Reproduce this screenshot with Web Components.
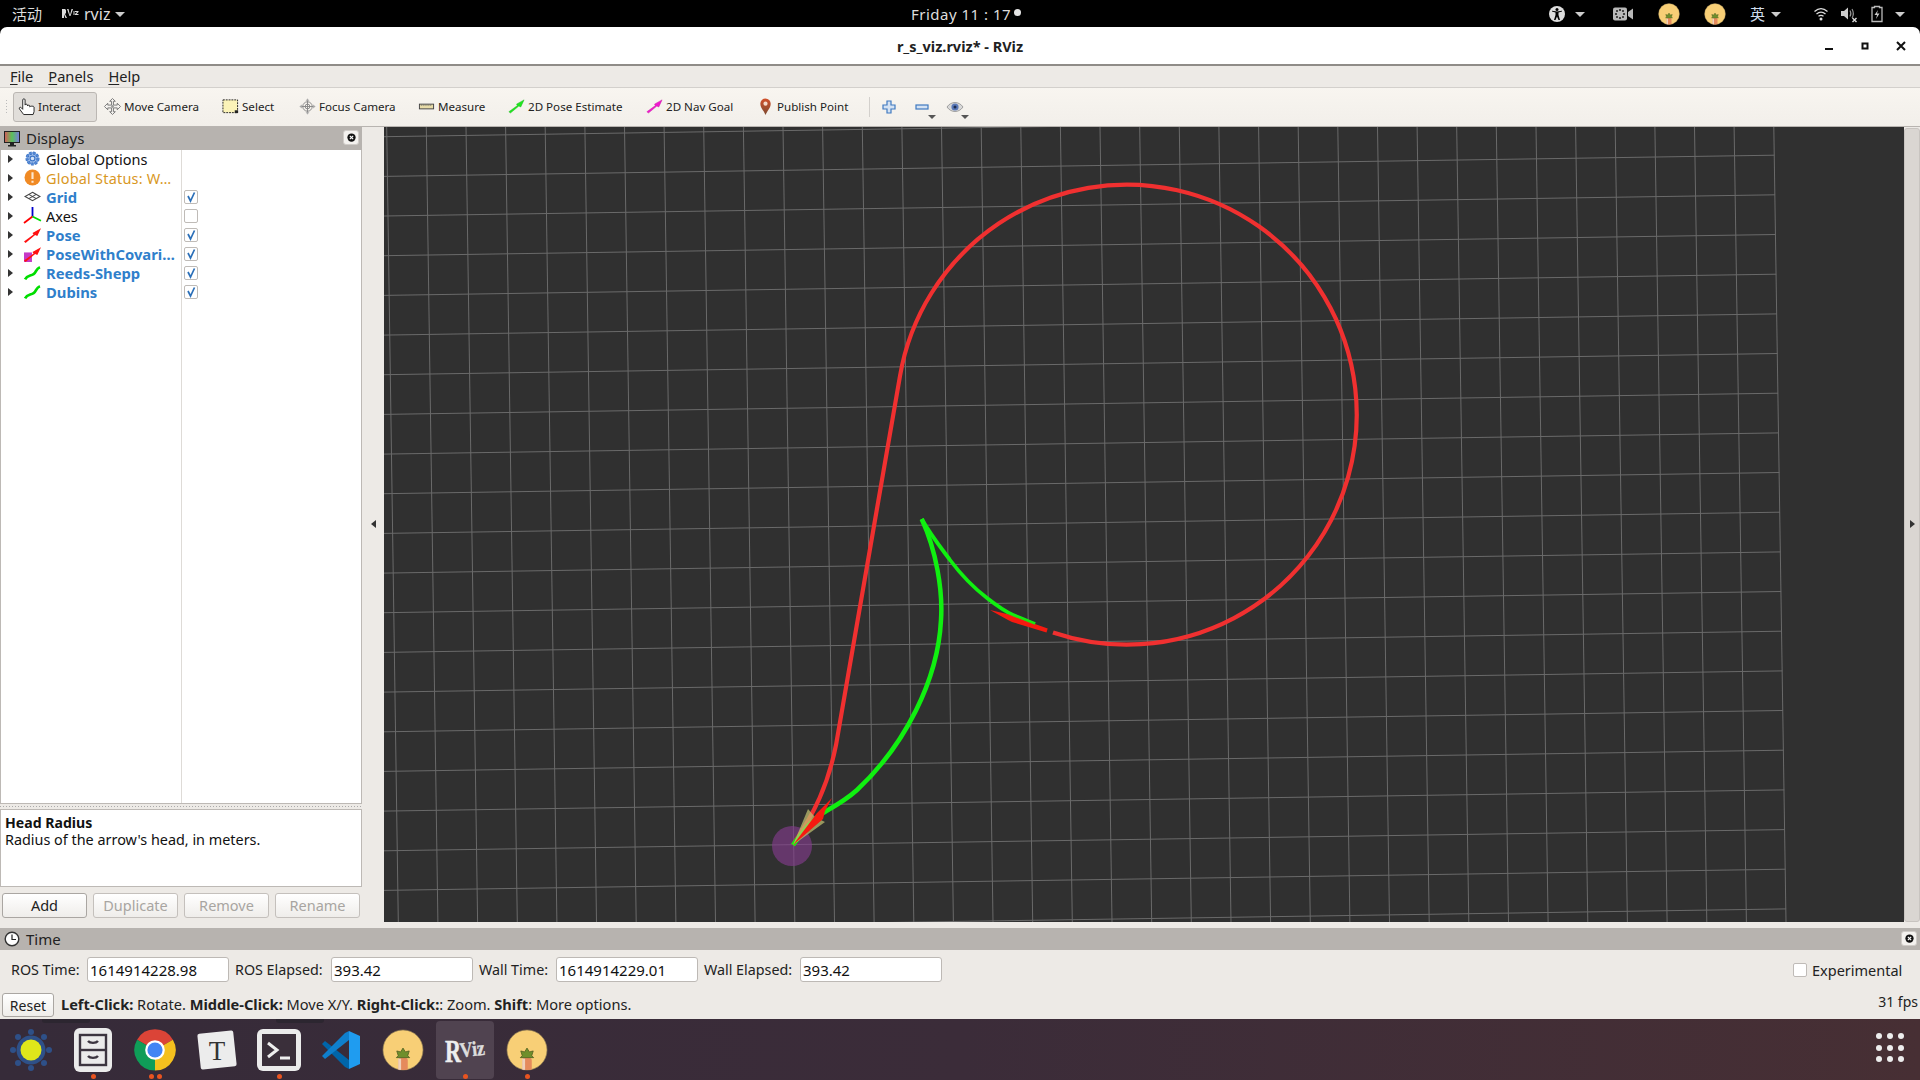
<!DOCTYPE html>
<html>
<head>
<meta charset="utf-8">
<title>RViz</title>
<style>
  html, body { margin: 0; padding: 0; background: #000; overflow: hidden; }
  body { font-family: "Noto Sans", "Noto Sans CJK SC", sans-serif; }
</style>
</head>
<body>
<rviz-app>
  <top-bar>
    <span slot="left" style="font-size:15px;margin-left:12px">活动</span>
    <app-icon slot="left" name="rvizsmall" size="18" style="margin-left:19px"></app-icon>
    <span slot="left" style="font-size:16px;margin-left:5px">rviz</span>
    <app-icon slot="left" name="caret" size="10" style="margin-left:5px"></app-icon>
    <app-icon slot="right" name="access" size="16"></app-icon>
    <app-icon slot="right" name="caret" size="10" style="margin-left:10px"></app-icon>
    <app-icon slot="right" name="camera" size="20" style="margin-left:28px"></app-icon>
    <app-icon slot="right" name="carrot" size="22" style="margin-left:25px"></app-icon>
    <app-icon slot="right" name="carrot" size="22" style="margin-left:24px"></app-icon>
    <span slot="right" style="font-size:15px;margin-left:24px;color:#cfdcec;width:15px">英</span>
    <app-icon slot="right" name="caret" size="10" style="margin-left:6px"></app-icon>
    <app-icon slot="right" name="wifi" size="14" style="margin-left:33px"></app-icon>
    <app-icon slot="right" name="speaker" size="16" style="margin-left:13px"></app-icon>
    <app-icon slot="right" name="battery" size="16" style="margin-left:12px"></app-icon>
    <app-icon slot="right" name="caret" size="10" style="margin-left:10px"></app-icon>
  </top-bar>
  <title-bar>r_s_viz.rviz* - RViz</title-bar>
  <menu-bar></menu-bar>
  <tool-bar>
    <tool-button icon="hand" w="84" active pad="4">Interact</tool-button>
    <tool-button icon="move" w="118">Move Camera</tool-button>
    <tool-button icon="select" w="77">Select</tool-button>
    <tool-button icon="focus" w="119">Focus Camera</tool-button>
    <tool-button icon="ruler" w="90">Measure</tool-button>
    <tool-button icon="posegreen" w="138">2D Pose Estimate</tool-button>
    <tool-button icon="posemagenta" w="111">2D Nav Goal</tool-button>
    <tool-button icon="pin" w="112">Publish Point</tool-button>
    <tool-divider></tool-divider>
    <tool-button icon="plus" w="33"></tool-button>
    <tool-button icon="minus" w="33" drop></tool-button>
    <tool-button icon="eye" w="33" drop></tool-button>
  </tool-bar>
  <main-row>
    <displays-panel slot="left">
      <tree-row icon="gear" label="Global Options"></tree-row>
      <tree-row icon="warn" label="Global Status: W…" tone="warn"></tree-row>
      <tree-row icon="grid" label="Grid" tone="on" check="on"></tree-row>
      <tree-row icon="axes" label="Axes" check="off"></tree-row>
      <tree-row icon="pose" label="Pose" tone="on" check="on"></tree-row>
      <tree-row icon="posecov" label="PoseWithCovari…" tone="on" check="on"></tree-row>
      <tree-row icon="path" label="Reeds-Shepp" tone="on" check="on"></tree-row>
      <tree-row icon="path" label="Dubins" tone="on" check="on"></tree-row>
    </displays-panel>
    <render-view slot="center"></render-view>
  </main-row>
  <time-panel>
    <time-field label="ROS Time:" value="1614914228.98" lw="76" style="margin-left:11px"></time-field>
    <time-field label="ROS Elapsed:" value="393.42" lw="96" style="margin-left:6px"></time-field>
    <time-field label="Wall Time:" value="1614914229.01" lw="77" style="margin-left:6px"></time-field>
    <time-field label="Wall Elapsed:" value="393.42" lw="96" style="margin-left:6px"></time-field>
  </time-panel>
  <status-row><b>Left-Click:</b> Rotate. <b>Middle-Click:</b> Move X/Y. <b>Right-Click:</b>: Zoom. <b>Shift</b>: More options.</status-row>
  <dock-bar>
    <dock-item icon="sun" w="62" size="48"></dock-item>
    <dock-item icon="files" w="62" size="46" dots="1"></dock-item>
    <dock-item icon="chrome" w="62" size="42" dots="2"></dock-item>
    <dock-item icon="typora" w="62" size="46"></dock-item>
    <dock-item icon="terminal" w="62" size="46" dots="1"></dock-item>
    <dock-item icon="vscode" w="62" size="40"></dock-item>
    <dock-item icon="carrot" w="62" size="42"></dock-item>
    <dock-item icon="rviz" w="62" size="58" dots="1" active></dock-item>
    <dock-item icon="carrot" w="62" size="42" dots="1"></dock-item>
  </dock-bar>
</rviz-app>

<script>
const CARROT = `<svg viewBox="0 0 44 44" width="100%" height="100%"><defs><clipPath id="cc"><circle cx="22" cy="22" r="21"/></clipPath></defs>
  <circle cx="22" cy="22" r="21" fill="#f8cf76" stroke="#8c7a52" stroke-width=".7"/>
  <g clip-path="url(#cc)"><rect x="17" y="30" width="10" height="16" rx="3" fill="#e58a5c"/><rect x="17" y="31" width="3" height="14" fill="#f2efe4" opacity=".7"/>
  <path d="M22 20l2.5 4 4-1-1.500 5 2 2h-14l2-2-1.500-5 4 1z" fill="#6f8f2c" stroke="#4d5c20" stroke-width=".8"/></g></svg>`;

const ARROW = "M0 14.500L9 8 8 6.500 16 2 12.500 9.500 10.500 8.500 1.500 16z";

const ICONS = {
  caret: '<svg viewBox="0 0 10 10"><path d="M0 3h10L5 8z" fill="#ccc"/></svg>',
  rvizsmall: '<svg viewBox="0 0 18 18"><path d="M1 4h3l1 1v3l-1 1 2 4H4.500L3 9.500V13H1zM6 4h1.500L9 10l1.500-6H12l-2.500 7h-1zM12.500 6h1v4h-1zM14 6h3.500v1L15.500 9H17.500v1H14V9l2-2h-2z" fill="#ddd"/></svg>',
  access: '<svg viewBox="0 0 16 16"><circle cx="8" cy="8" r="8" fill="#ddd"/><circle cx="8" cy="3.600" r="1.500" fill="#000"/><path d="M3 5.500l3.500 1V9L5 14h1.500L8 10.500 9.500 14H11L9.500 9V6.500l3.500-1V4.700L8 5.600 3 4.700z" fill="#000"/></svg>',
  camera: '<svg viewBox="0 0 20 14"><rect width="14" height="13" y=".5" rx="2" fill="#b9b9b9"/><path d="M15 5l5-3.500v11L15 9z" fill="#b9b9b9"/><g fill="#222"><circle cx="7" cy="3" r="1.100"/><circle cx="7" cy="11" r="1.100"/><circle cx="3" cy="7" r="1.100"/><circle cx="11" cy="7" r="1.100"/><circle cx="4" cy="4" r="1"/><circle cx="10" cy="4" r="1"/><circle cx="4" cy="10" r="1"/><circle cx="10" cy="10" r="1"/></g></svg>',
  carrot: CARROT,
  wifi: '<svg viewBox="0 0 14 14"><g fill="none" stroke="#ddd" stroke-width="1.300"><path d="M.5 4.500c4-3.500 9-3.500 13 0"/><path d="M2.500 7c3-2.500 6-2.500 9 0"/><path d="M4.500 9.300c1.500-1.200 3.500-1.200 5 0"/></g><circle cx="7" cy="12" r="1.500" fill="#ddd"/></svg>',
  speaker: '<svg viewBox="0 0 16 16"><path d="M0 5h3l4-3.500v12L3 10H0z" fill="#ccc"/><g fill="none" stroke="#999" stroke-width="1.100"><path d="M9 4.500c1.200 2 1.200 4 0 6"/><path d="M11 3c1.800 3 1.800 6 0 9"/></g><path d="M11.500 12l4 4m0-4l-4 4" stroke="#ddd" stroke-width="1.400"/></svg>',
  battery: '<svg viewBox="0 0 16 16"><path d="M5.500 1.500v-1h5v1h2.500v14H3v-14z" fill="none" stroke="#bbb" stroke-width="1.300"/><path d="M9 4L5.500 9H8l-1 4 3.500-5.500H8z" fill="#ccc"/></svg>',
  hand: '<svg viewBox="0 0 18 18"><path d="M6 17.500L1.500 11.500C.8 10 2.500 9.300 3.500 10.300L5 12V2C5 .5 7.500 .5 7.500 2V7.500C7.500 6.200 10 6.200 10 7.500V8.500C10 7.300 12.500 7.300 12.500 8.500V9.500C12.500 8.300 17 8.300 17 9.500V14.500L16 17.500z" fill="#fff" stroke="#222" stroke-width="1"/></svg>',
  move: '<svg viewBox="0 0 18 18"><path d="M9 .5l3 3h-2v4h4v-2l3.500 3.500-3.500 3.500v-2h-4v4h2l-3 3-3-3h2v-4H4v2L.5 9 4 5.500v2h4v-4H6z" fill="#f4f2ef" stroke="#777" stroke-width="1"/><circle cx="9" cy="9" r="1.500" fill="#999"/></svg>',
  select: '<svg viewBox="0 0 18 18"><rect x="1" y="2" width="15.500" height="13.500" fill="#fbf3b8" stroke="#222" stroke-dasharray="2 1"/><path d="M13.500 13h3.500v3h-3.500z" fill="#222"/></svg>',
  focus: '<svg viewBox="0 0 18 18"><g fill="none" stroke="#888"><circle cx="9" cy="9" r="5"/><circle cx="9" cy="9" r="2.500"/><path d="M9 1v16M1 9h16"/></g><path d="M9 .5l2 2.500H7zM9 17.500l2-2.500H7zM.5 9L3 7v4zM17.500 9L15 7v4z" fill="#aaa"/></svg>',
  ruler: '<svg viewBox="0 0 18 18"><rect x="1.500" y="6.500" width="15" height="5" fill="#e8dca8" stroke="#444"/><path d="M3.500 6.500v2M5.500 6.500v2M7.500 6.500v2M9.500 6.500v2M11.500 6.500v2M13.500 6.500v2" stroke="#666" stroke-width=".7"/></svg>',
  posegreen: `<svg viewBox="0 0 18 18"><path d="${ARROW}" transform="translate(1 0)" fill="#1ee81e" stroke="#18b418" stroke-width=".5"/></svg>`,
  posemagenta: `<svg viewBox="0 0 18 18"><path d="${ARROW}" transform="translate(1 0)" fill="#f018d0" stroke="#c8149c" stroke-width=".5"/></svg>`,
  pin: '<svg viewBox="0 0 18 18"><defs><linearGradient id="pg" x1="0" y1="0" x2="0" y2="1"><stop offset="0" stop-color="#d2502a"/><stop offset="1" stop-color="#7d4a30"/></linearGradient></defs><path d="M9 18C7 13 3.500 10.500 3.500 6a5.500 5.500 0 0111 0C14.500 10.500 11 13 9 18z" fill="url(#pg)"/><circle cx="9" cy="6" r="2.200" fill="#f4d9c9"/></svg>',
  plus: '<svg viewBox="0 0 14 14"><path d="M5 1h4v4h4v4H9v4H5V9H1V5h4z" fill="#d4e2f3" stroke="#3f79c0" stroke-width="1.200"/></svg>',
  minus: '<svg viewBox="0 0 14 14"><rect x="1" y="5" width="12" height="4" fill="#d4e2f3" stroke="#3f79c0" stroke-width="1.200"/></svg>',
  eye: '<svg viewBox="0 0 18 14"><path d="M1 7c4-6 12-6 16 0-4 6-12 6-16 0z" fill="#d8d8d8" stroke="#a0a0a0"/><circle cx="9" cy="7" r="3.600" fill="#5a78b8"/><circle cx="9" cy="7" r="1.500" fill="#1c2c50"/></svg>',
  monitor: '<svg viewBox="0 0 16 16"><defs><linearGradient id="mg" x1="0" x2="1"><stop offset="0" stop-color="#d85a5a"/><stop offset=".5" stop-color="#5ac05a"/><stop offset="1" stop-color="#7a7ae0"/></linearGradient></defs><rect x=".5" y=".5" width="15" height="11" fill="url(#mg)" stroke="#222"/><path d="M6 12h4v2H6zM4 14h8v1.500H4z" fill="#222"/></svg>',
  clock: '<svg viewBox="0 0 16 16"><circle cx="8" cy="8" r="6.800" fill="#fff" stroke="#333" stroke-width="1.400"/><path d="M8 3.500V8.500h4" fill="none" stroke="#222" stroke-width="1.200"/></svg>',
  closex: '<svg viewBox="0 0 12 12"><circle cx="6" cy="6" r="4.500" fill="#111"/><path d="M4.200 4.200l3.600 3.600m0-3.600L4.200 7.800" stroke="#fff" stroke-width="1.300"/></svg>',
  gear: '<svg viewBox="0 0 14 14"><circle cx="7" cy="7" r="4.500" fill="#a8c4ee" stroke="#3e76c6" stroke-width="2.600" stroke-dasharray="2 1"/><circle cx="7" cy="7" r="4.600" fill="none" stroke="#5a8cd6" stroke-width="1"/><circle cx="7" cy="7" r="2" fill="#d5e2f6" stroke="#3e76c6"/></svg>',
  warn: '<svg viewBox="0 0 16 16"><circle cx="8" cy="8" r="7.500" fill="#f08a24"/><path d="M7 3h2v6.500H7zM7 11h2v2H7z" fill="#fde8d0"/></svg>',
  grid: '<svg viewBox="0 0 16 16"><path d="M8 4l7 4-7 4-7-4z" fill="none" stroke="#444" stroke-width="1"/><path d="M4.500 6L11.500 10M11.500 6L4.500 10" stroke="#444" stroke-width="1"/></svg>',
  axes: '<svg viewBox="0 0 16 16"><path d="M8 9V0" stroke="#00c" stroke-width="1.700"/><path d="M8 9l-8 6" stroke="#f00" stroke-width="1.700"/><path d="M8 9l8 4" stroke="#0d0" stroke-width="1.700"/></svg>',
  pose: `<svg viewBox="0 0 16 16"><path d="${ARROW}" fill="#f11"/></svg>`,
  posecov: `<svg viewBox="0 0 16 16"><rect y="7" width="7.500" height="9" fill="#c63ac6"/><path d="${ARROW}" fill="#f11"/></svg>`,
  path: '<svg viewBox="0 0 16 16"><path d="M1 14.500c2-4 5-3 8-5s2-5 6-6.500" fill="none" stroke="#0d0" stroke-width="2.600"/></svg>',
  sun: '<svg viewBox="0 0 48 48"><g fill="#2e5088"><circle cx="24" cy="6" r="3"/><circle cx="24" cy="42" r="3"/><circle cx="6" cy="24" r="3"/><circle cx="42" cy="24" r="3"/><circle cx="11" cy="11" r="3"/><circle cx="37" cy="11" r="3"/><circle cx="11" cy="37" r="3"/><circle cx="37" cy="37" r="3"/></g><circle cx="24" cy="24" r="14.500" fill="#2e5088"/><circle cx="24" cy="24" r="10.500" fill="#dfe61a"/></svg>',
  files: '<svg viewBox="0 0 46 46"><rect x="4" y="1" width="38" height="44" rx="6" fill="#ebebeb"/><rect x="10" y="8" width="26" height="30" fill="none" stroke="#3c3540" stroke-width="2.400"/><path d="M10 23h26" stroke="#3c3540" stroke-width="2.400"/><path d="M18 14c2 2.500 8 2.500 10 0M18 29c2 2.500 8 2.500 10 0" fill="none" stroke="#3c3540" stroke-width="2.400"/></svg>',
  chrome: `<svg viewBox="-21 -21 42 42"><path d="M0 0L-17.900-10.300A20.600 20.600 0 0117.900-10.300z" fill="#db4437"/><path d="M0 0L17.900-10.300A20.600 20.600 0 010 20.600z" fill="#f4c01e"/><path d="M0 0L0 20.600A20.600 20.600 0 01-17.900-10.300z" fill="#0f9d58"/><circle r="9.800" fill="#fff"/><circle r="7.600" fill="#4285f4"/></svg>`,
  typora: '<svg viewBox="0 0 46 46"><rect x="5" y="5" width="36" height="36" rx="2" fill="#ececec" transform="rotate(-6 23 23)"/><text x="23" y="33" text-anchor="middle" font-family="Liberation Serif, serif" font-size="27" fill="#333">T</text></svg>',
  terminal: '<svg viewBox="0 0 46 46"><rect x="1" y="2" width="44" height="42" rx="6" fill="#ebebeb"/><rect x="6" y="7" width="34" height="32" fill="#3a2f3a"/><path d="M12 16l9 7-9 7" fill="none" stroke="#eee" stroke-width="3"/><path d="M24 31h10" stroke="#eee" stroke-width="3"/></svg>',
  vscode: '<svg viewBox="0 0 40 40"><path d="M1 14l3-3 24 19v9l-4-2z" fill="#0065a9"/><path d="M1 26l3 3L28 10V1l-4 2z" fill="#0f7fcc"/><path d="M28 1l11 5v28l-11 5z" fill="#1f9cf0"/></svg>',
  rviz: '<svg viewBox="0 0 58 58"><text x="9" y="41" font-family="Liberation Serif, serif" font-weight="700" font-size="31" fill="#eee" stroke="#eee" stroke-width=".5" textLength="16" lengthAdjust="spacingAndGlyphs">R</text><text x="24" y="35" transform="rotate(-6 36 30)" font-family="Liberation Serif, serif" font-weight="700" font-size="21" fill="#ddd" stroke="#ddd" stroke-width=".4" textLength="25" lengthAdjust="spacingAndGlyphs">Viz</text></svg>'
};

function define(name, cls) { customElements.get(name) || customElements.define(name, cls); }

class AppIcon extends HTMLElement {
  connectedCallback() {
    const s = this.getAttribute("size") || 16;
    this.attachShadow({ mode: "open" }).innerHTML = `<style>
      :host { display: inline-flex; width: ${s}px; height: ${s}px; flex: none; align-items: center; justify-content: center; }
      svg { width: 100%; height: 100%; display: block; overflow: visible; }
    </style>${ICONS[this.getAttribute("name")] || ""}`;
  }
}
define("app-icon", AppIcon);

class RvizApp extends HTMLElement {
  constructor() {
    super();
    this.attachShadow({ mode: "open" }).innerHTML = `<style>
      :host { display: flex; flex-direction: column; width: 1920px; height: 1080px; overflow: hidden; color: #111; font-family: "Noto Sans", "Noto Sans CJK SC", sans-serif; }
    </style><slot></slot>`;
  }
}
define("rviz-app", RvizApp);

class TopBar extends HTMLElement {
  constructor() {
    super();
    this.attachShadow({ mode: "open" }).innerHTML = `<style>
      :host { display: grid; grid-template-columns: 1fr 220px 1fr; align-items: center; height: 27px; background: #000; color: #ddd; flex: none; }
      .l, .r { display: flex; align-items: center; }
      .r { justify-content: flex-end; padding-right: 15px; }
      .c { display: flex; align-items: center; justify-content: center; gap: 3px; padding-left: 12px; font-size: 15px; letter-spacing: .5px; color: #ddd; }
      i { width: 7px; height: 7px; border-radius: 50%; background: #e4e4e4; margin-top: -2px; }
    </style>
    <div class="l"><slot name="left"></slot></div>
    <div class="c"><span>Friday 11 : 17</span><i></i></div>
    <div class="r"><slot name="right"></slot></div>`;
  }
}
define("top-bar", TopBar);

class TitleBar extends HTMLElement {
  constructor() {
    super();
    this.attachShadow({ mode: "open" }).innerHTML = `<style>
      :host { display: flex; align-items: center; justify-content: center; position: relative; height: 37px; flex: none; background: #fff; border-radius: 7px 7px 0 0; border-bottom: 2px solid #8f8c88; font-size: 14.500px; font-weight: 700; color: #222; }
      .ctl { position: absolute; right: 13px; top: 0; height: 100%; display: flex; align-items: center; gap: 24px; }
      svg { width: 12px; height: 12px; display: block; }
    </style><slot></slot>
    <div class="ctl">
      <svg viewBox="0 0 12 12"><path d="M2 9h8" stroke="#111" stroke-width="2"/></svg>
      <svg viewBox="0 0 12 12"><rect x="3.500" y="3.500" width="5" height="5" fill="none" stroke="#111" stroke-width="2"/></svg>
      <svg viewBox="0 0 12 12"><path d="M2 2l8 8m0-8l-8 8" stroke="#111" stroke-width="2"/></svg>
    </div>`;
  }
}
define("title-bar", TitleBar);

class MenuBar extends HTMLElement {
  constructor() {
    super();
    this.attachShadow({ mode: "open" }).innerHTML = `<style>
      :host { display: flex; align-items: center; height: 21px; box-sizing: content-box; flex: none; padding-left: 10px; gap: 15px; background: #edeae6; border-bottom: 1px solid #d3d0cc; font-size: 14.600px; color: #222; }
      span { margin-top: -2px; }
      u { text-underline-offset: 2px; }
    </style><span><u>F</u>ile</span><span><u>P</u>anels</span><span><u>H</u>elp</span>`;
  }
}
define("menu-bar", MenuBar);

class ToolBar extends HTMLElement {
  constructor() {
    super();
    this.attachShadow({ mode: "open" }).innerHTML = `<style>
      :host { display: flex; align-items: center; height: 39px; box-sizing: border-box; padding-bottom: 1px; flex: none; padding-left: 13px; position: relative; background: linear-gradient(#f8f5f0, #f2efea); border-bottom: 1px solid #b8b4b0; box-shadow: inset 0 -1px 0 #f2efea; }
      .grip { position: absolute; left: 5px; top: 11px; width: 3px; height: 16px; background: radial-gradient(circle, #bbb 40%, transparent 45%) 0 0/3px 3px; }
    </style><div class="grip"></div><slot></slot>`;
  }
}
define("tool-bar", ToolBar);

class ToolDivider extends HTMLElement {
  constructor() {
    super();
    this.attachShadow({ mode: "open" }).innerHTML = `<style>
      :host { display: block; width: 1px; height: 20px; background: #d3d0cc; margin: 0 2px 0 0; flex: none; }
    </style>`;
  }
}
define("tool-divider", ToolDivider);

class ToolButton extends HTMLElement {
  connectedCallback() {
    const w = this.getAttribute("w");
    const pad = this.getAttribute("pad") || 0;
    const size = { plus: 14, minus: 14, eye: 18 }[this.getAttribute("icon")] || 17;
    const drop = this.hasAttribute("drop") ? '<span class="drop"></span>' : "";
    this.attachShadow({ mode: "open" }).innerHTML = `<style>
      :host { display: flex; align-items: center; gap: 3px; width: ${w}px; height: 30px; flex: none; box-sizing: border-box; padding-left: ${pad}px; font-size: 11.600px; color: #222; position: relative; }
      :host([active]) { background: #e1deda; border: 1px solid #bbb7b3; border-radius: 3px; margin-right: 7px; }
      :host([icon=plus]), :host([icon=minus]), :host([icon=eye]) { justify-content: center; }
      .drop { position: absolute; right: 2px; bottom: 3px; border: 4px solid transparent; border-top: 4px solid #555; border-bottom: 0; }
    </style><app-icon name="${this.getAttribute("icon")}" size="${size}"></app-icon><slot></slot>${drop}`;
  }
}
define("tool-button", ToolButton);

class MainRow extends HTMLElement {
  constructor() {
    super();
    this.attachShadow({ mode: "open" }).innerHTML = `<style>
      :host { display: flex; height: 796px; flex: none; background: #edeae6; }
      .split { width: 22px; flex: none; display: flex; align-items: center; justify-content: center; }
      .split i { border: 4px solid transparent; border-right: 5px solid #333; border-left: 0; margin-top: -2px; }
      .handle { width: 16px; flex: none; box-sizing: border-box; background: #dad6d2; border: 1px solid #c8c4c0; border-radius: 3px; margin: 1px 0; display: flex; align-items: center; justify-content: center; }
      .handle i { border: 4px solid transparent; border-left: 5px solid #333; border-right: 0; margin-top: -2px; }
    </style>
    <slot name="left"></slot>
    <div class="split"><i></i></div>
    <slot name="center"></slot>
    <div class="handle"><i></i></div>`;
  }
}
define("main-row", MainRow);

class PanelTitle extends HTMLElement {
  connectedCallback() {
    this.attachShadow({ mode: "open" }).innerHTML = `<style>
      :host { display: flex; align-items: center; height: var(--h, 23px); flex: none; padding-left: 4px; gap: 6px; background: #b7b3af; font-size: 15px; color: #222; position: relative; }
      .t { margin-top: var(--tt, -1px); }
      .x { position: absolute; right: 3px; top: 3px; width: 16px; height: 15px; background: #f4f2ef; border: 1px solid #d0ccc8; border-radius: 3px; box-sizing: border-box; display: flex; align-items: center; justify-content: center; }
      .x svg { width: 11px; height: 11px; }
    </style><app-icon name="${this.getAttribute("icon")}" size="16"></app-icon><span class="t"><slot></slot></span><div class="x">${ICONS.closex}</div>`;
  }
}
define("panel-title", PanelTitle);

class DisplaysPanel extends HTMLElement {
  constructor() {
    super();
    this.attachShadow({ mode: "open" }).innerHTML = `<style>
      :host { display: flex; flex-direction: column; width: 362px; flex: none; font-size: 14px; }
      .tree { height: 654px; box-sizing: border-box; background: linear-gradient(#dedbd7, #dedbd7) 180px 0/1px 100% no-repeat, #fff; border: 1px solid #bdb9b5; border-top: 0; }
      .rows { margin-top: -1px; }
      .grip { height: 5px; flex: none; background: radial-gradient(circle, #aaa 40%, transparent 45%) 173px 1px/3px 3px repeat-x; }
      .help { height: 78px; box-sizing: border-box; flex: none; padding: 4px; background: #fff; border: 1px solid #bdb9b5; font-size: 14.400px; line-height: 17px; color: #111; }
      .help b { display: block; font-size: 14.100px; }
      .btns { display: flex; gap: 6px; padding: 6px 2px 0; }
      .btn { width: 85px; height: 25px; box-sizing: border-box; padding-bottom: 2px; display: flex; align-items: center; justify-content: center; background: linear-gradient(#fff, #efedea); border: 1px solid #c4c0bc; border-radius: 3px; color: #a8a5a1; font-size: 14.500px; }
      .btn.on { color: #222; border-color: #aaa6a2; }
    </style>
    <panel-title icon="monitor">Displays</panel-title>
    <div class="tree"><div class="rows"><slot></slot></div></div>
    <div class="grip"></div>
    <div class="help"><b>Head Radius</b>Radius of the arrow's head, in meters.</div>
    <div class="btns"><div class="btn on">Add</div><div class="btn">Duplicate</div><div class="btn">Remove</div><div class="btn">Rename</div></div>`;
  }
}
define("displays-panel", DisplaysPanel);

class TreeRow extends HTMLElement {
  connectedCallback() {
    const check = this.getAttribute("check");
    const box = check ? `<span class="box">${check === "on" ? '<svg viewBox="0 0 12 12" width="12" height="12"><path d="M3 5l2.500 5L9.500 1.500" fill="none" stroke="#2b6fb8" stroke-width="1.700"/></svg>' : ""}</span>` : "";
    this.attachShadow({ mode: "open" }).innerHTML = `<style>
      :host { display: flex; align-items: center; height: 19px; font-size: 14.500px; color: #111; }
      :host([tone=on]) .t { color: #2f7fcb; font-weight: 700; font-size: 14.800px; }
      :host([tone=warn]) .t { color: #d9981f; letter-spacing: .2px; }
      .tri { width: 0; height: 0; margin-left: 7px; border: 4.500px solid transparent; border-left: 5px solid #333; border-right: 0; flex: none; }
      .ic { width: 17px; height: 17px; margin-left: 11px; flex: none; display: flex; }
      .t { margin-left: 5px; width: 137px; flex: none; white-space: nowrap; overflow: hidden; }
      .box { width: 14px; height: 14px; box-sizing: border-box; margin-left: 1px; background: #fff; border: 1px solid #bfbbb7; border-radius: 2px; display: flex; align-items: center; justify-content: center; flex: none; }
    </style><span class="tri"></span><span class="ic"><app-icon name="${this.getAttribute("icon")}" size="17"></app-icon></span><span class="t">${this.getAttribute("label")}</span>${box}`;
  }
}
define("tree-row", TreeRow);

class RenderView extends HTMLElement {
  connectedCallback() {
    let grid = "";
    for (let k = 0; k <= 35; k++) {
      grid += `<path d="M${(386.7 + 39.63 * k).toFixed(1)} 127L${(398.3 + 39.65 * k).toFixed(1)} 922"/>`;
    }
    for (let j = 0; j <= 20; j++) {
      const yl = 136.7 + 39.67 * j;
      const yr = yl - 21.2;
      const xr = 1774 + (yr - 127) * 0.0155;
      grid += `<path d="M384 ${yl.toFixed(1)}L${xr.toFixed(1)} ${yr.toFixed(1)}"/>`;
    }
    this.attachShadow({ mode: "open" }).innerHTML = `<style>
      :host { display: block; width: 1520px; height: 795px; flex: none; background: #303030; }
      svg { display: block; width: 1520px; height: 795px; }
    </style>
    <svg viewBox="384 127 1520 795">
      <g stroke="#6a6a6a" stroke-width="1" fill="none">${grid}</g>
      <circle cx="792" cy="846" r="20" fill="#823c8c" fill-opacity=".65"/>
      <path d="M1053 632.500A230 230 0 1 0 900 376L836 745C828 785 815 812 793 845" fill="none" stroke="#f03030" stroke-width="4.200"/>
      <path d="M921.700 519C932 537 942 549 950 560C962 576 974 588 987 598C996 605 1004 611 1013 615C1020 618 1028 621 1035 624" fill="none" stroke="#10f010" stroke-width="3.800"/>
      <path d="M921.700 519C936 550 943 590 941 620C938 680 905 745 857 790C846 800 835 806 823 813C812 820 802 832 793 845" fill="none" stroke="#10f010" stroke-width="4.500"/>
      <path d="M793 845L808 809L815 817L825 822z" fill="#c0c070" fill-opacity=".72"/>
      <path d="M793 845L817 813L832 798L825 811L823 819z" fill="#f61a10"/>
      <path d="M990 610L1007 614L1047.700 628.500L1046.500 632.500L1012 622L1008 620z" fill="#f61a10"/>
      <path d="M1012 615L1035 624" stroke="#22e010" stroke-width="1.500"/>
    </svg>`;
  }
}
define("render-view", RenderView);

class TimeField extends HTMLElement {
  connectedCallback() {
    this.attachShadow({ mode: "open" }).innerHTML = `<style>
      :host { display: flex; align-items: center; flex: none; font-size: 14.300px; color: #222; }
      .l { width: ${this.getAttribute("lw")}px; flex: none; white-space: nowrap; }
      .v { width: 142px; height: 25px; box-sizing: border-box; padding-left: 2px; display: flex; align-items: center; background: #fff; border: 1px solid #bdb9b5; border-radius: 3px; color: #111; font-size: 15px; }
    </style><span class="l">${this.getAttribute("label")}</span><span class="v">${this.getAttribute("value")}</span>`;
  }
}
define("time-field", TimeField);

class TimePanel extends HTMLElement {
  constructor() {
    super();
    this.attachShadow({ mode: "open" }).innerHTML = `<style>
      :host { display: block; flex: none; height: 69px; box-sizing: border-box; padding-top: 5px; background: #edeae6; --h: 22px; --tt: 0px; }
      .row { display: flex; align-items: center; height: 25px; margin-top: 7px; position: relative; }
      .exp { position: absolute; left: 1793px; top: 0; height: 25px; display: flex; align-items: center; gap: 5px; font-size: 14.500px; color: #222; }
      .exp i { width: 14px; height: 14px; box-sizing: border-box; background: #fff; border: 1px solid #bfbbb7; border-radius: 2px; }
    </style>
    <panel-title icon="clock">Time</panel-title>
    <div class="row"><slot></slot><div class="exp"><i></i>Experimental</div></div>`;
  }
}
define("time-panel", TimePanel);

class StatusRow extends HTMLElement {
  constructor() {
    super();
    this.attachShadow({ mode: "open" }).innerHTML = `<style>
      :host { display: flex; align-items: center; height: 27px; flex: none; box-sizing: border-box; padding: 1px 2px 2px; background: #edeae6; font-size: 14.600px; color: #222; white-space: nowrap; position: relative; }
      .reset { width: 52px; height: 24px; box-sizing: border-box; display: flex; align-items: center; justify-content: center; font-size: 14px; background: linear-gradient(#fff, #efedea); border: 1px solid #aaa6a2; border-radius: 3px; margin-right: 7px; }
      .msg { margin-top: -2px; }
      .fps { position: absolute; right: 2px; top: 0; font-size: 14px; }
    </style><div class="reset">Reset</div><span class="msg"><slot></slot></span><span class="fps">31 fps</span>`;
  }
}
define("status-row", StatusRow);

class DockBar extends HTMLElement {
  constructor() {
    super();
    this.attachShadow({ mode: "open" }).innerHTML = `<style>
      :host { display: flex; height: 61px; flex: none; position: relative; padding-left: 0; background: linear-gradient(90deg, #362b39, #3b2c39 50%, #472f34); }
      .bar { position: absolute; top: 0; height: 4px; width: 48px; border-radius: 0 0 3px 3px; background: #2c2630; }
      .apps { position: absolute; right: 14px; top: 14px; width: 30px; height: 30px; display: grid; grid-template-columns: repeat(3, 6px); gap: 5px; }
      .apps i { width: 6px; height: 6px; border-radius: 50%; background: #eee; }
    </style>
    <div class="bar" style="left:42px"></div><div class="bar" style="left:276px"></div>
    <slot></slot>
    <div class="apps"><i></i><i></i><i></i><i></i><i></i><i></i><i></i><i></i><i></i></div>`;
  }
}
define("dock-bar", DockBar);

class DockItem extends HTMLElement {
  connectedCallback() {
    const n = +(this.getAttribute("dots") || 0);
    let dots = "";
    for (let i = 0; i < n; i++) dots += "<i></i>";
    this.attachShadow({ mode: "open" }).innerHTML = `<style>
      :host { display: flex; align-items: center; justify-content: center; width: ${this.getAttribute("w")}px; height: 61px; flex: none; position: relative; }
      :host([active])::before { content: ""; position: absolute; left: 2px; top: 2px; right: 2px; bottom: 1px; background: #504350; border-radius: 4px; }
      app-icon { position: relative; }
      .d { position: absolute; bottom: 1px; left: 0; right: 0; display: flex; justify-content: center; gap: 3px; }
      .d i { width: 5px; height: 5px; border-radius: 50%; background: #e95420; }
    </style><app-icon name="${this.getAttribute("icon")}" size="${this.getAttribute("size")}"></app-icon><div class="d">${dots}</div>`;
  }
}
define("dock-item", DockItem);
</script>
</body>
</html>
